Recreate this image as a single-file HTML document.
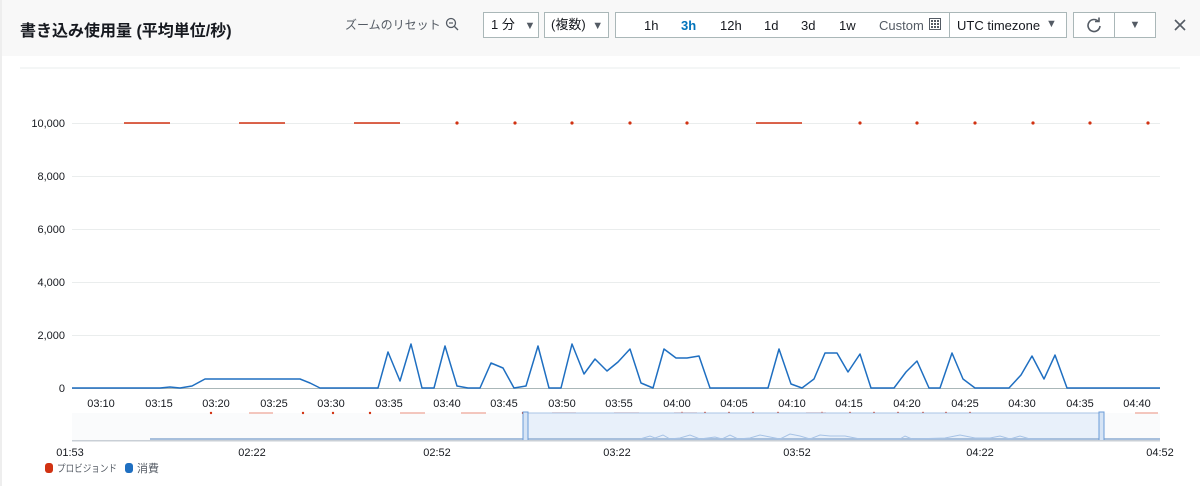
<!DOCTYPE html>
<html><head><meta charset="utf-8"><style>
*{margin:0;padding:0;box-sizing:border-box}
body{width:1200px;height:486px;background:#fff;font-family:"Liberation Sans","Noto Sans CJK JP",sans-serif;position:relative;overflow:hidden;color:#16191f}
.hdr{position:absolute;left:0;top:0;width:1200px;height:56px;background:#f8f8f8}
.abs{position:absolute}
.box{position:absolute;top:12px;height:26px;border:1px solid #aab7b8;background:#fff;font-size:13px;line-height:24px}
</style></head><body>
<div class="hdr"></div>
<div class="abs" style="left:0;top:0;width:2px;height:486px;background:#eeeeee"></div>
<div class="abs" style="left:20px;top:17px;font-size:16px;font-weight:bold">書き込み使用量 (平均単位/秒)</div>
<div class="abs" style="left:345px;top:16px;font-size:12px;color:#545b64">ズームのリセット</div>
<svg class="abs" style="left:445px;top:17px" width="14" height="14"><circle cx="6" cy="6" r="4.5" fill="none" stroke="#545b64" stroke-width="1.3"/><line x1="9.5" y1="9.5" x2="13" y2="13" stroke="#545b64" stroke-width="1.3"/><line x1="4" y1="6" x2="8" y2="6" stroke="#545b64" stroke-width="1.2"/></svg>
<div class="box" style="left:483px;width:56px;padding-left:7px">1 分 <span style="font-size:11px;margin-left:6px;color:#545b64">▼</span></div>
<div class="box" style="left:544px;width:65px;padding-left:6px">(複数) <span style="font-size:11px;margin-left:3px;color:#545b64">▼</span></div>
<div class="box" style="left:615px;width:452px"></div>
<div class="abs" style="top:18px;font-size:13px;left:644px">1h</div>
<div class="abs" style="top:18px;font-size:13px;left:681px;color:#0073bb;font-weight:bold">3h</div>
<div class="abs" style="top:18px;font-size:13px;left:720px">12h</div>
<div class="abs" style="top:18px;font-size:13px;left:764px">1d</div>
<div class="abs" style="top:18px;font-size:13px;left:801px">3d</div>
<div class="abs" style="top:18px;font-size:13px;left:839px">1w</div>
<div class="abs" style="top:18px;font-size:13px;left:879px;color:#545b64">Custom</div>
<svg class="abs" style="left:929px;top:18px" width="12" height="12"><rect x="0.5" y="0.5" width="11" height="11" fill="#fff" stroke="#545b64"/><g fill="#545b64"><rect x="2" y="2" width="2" height="2"/><rect x="5" y="2" width="2" height="2"/><rect x="8" y="2" width="2" height="2"/><rect x="2" y="5" width="2" height="2"/><rect x="5" y="5" width="2" height="2"/><rect x="8" y="5" width="2" height="2"/><rect x="2" y="8" width="2" height="2"/><rect x="5" y="8" width="2" height="2"/><rect x="8" y="8" width="2" height="2"/></g></svg>
<div class="abs" style="left:949px;top:12px;width:1px;height:26px;background:#aab7b8"></div>
<div class="abs" style="top:18px;font-size:13px;left:957px">UTC timezone</div>
<div class="abs" style="top:18px;font-size:11px;left:1046px;color:#545b64">▼</div>
<div class="box" style="left:1073px;width:42px"></div>
<svg class="abs" style="left:1086px;top:17px" width="16" height="16"><path d="M12.5 4.5 A6 6 0 1 0 14 9" fill="none" stroke="#545b64" stroke-width="1.6"/><path d="M9 4.5 L13 4.5 L13 0.5" fill="none" stroke="#545b64" stroke-width="1.6"/></svg>
<div class="box" style="left:1114px;width:42px;text-align:center;font-size:11px;color:#545b64">▼</div>
<svg class="abs" style="left:1174px;top:19px" width="12" height="12"><path d="M1 1 L11 11 M11 1 L1 11" stroke="#545b64" stroke-width="1.6"/></svg>

<svg class="abs" style="left:0;top:0" width="1200" height="486">
<g stroke="#eaeded" stroke-width="1">
<line x1="20" y1="68" x2="1180" y2="68"/>
<line x1="72" y1="123.5" x2="1160" y2="123.5"/><line x1="72" y1="176.5" x2="1160" y2="176.5"/><line x1="72" y1="229.5" x2="1160" y2="229.5"/><line x1="72" y1="282.5" x2="1160" y2="282.5"/><line x1="72" y1="335.5" x2="1160" y2="335.5"/>
</g>
<line x1="72" y1="388.5" x2="1160" y2="388.5" stroke="#aab7b8"/>
<g font-size="11" fill="#16191f" text-anchor="end" font-family="Liberation Sans">
<text x="65" y="127">10,000</text><text x="65" y="180">8,000</text><text x="65" y="233">6,000</text><text x="65" y="286">4,000</text><text x="65" y="339">2,000</text><text x="65" y="392">0</text>
</g>
<g font-size="11" fill="#16191f" text-anchor="middle" font-family="Liberation Sans">
<text x="101" y="407">03:10</text><text x="159" y="407">03:15</text><text x="216" y="407">03:20</text><text x="274" y="407">03:25</text><text x="331" y="407">03:30</text><text x="389" y="407">03:35</text><text x="447" y="407">03:40</text><text x="504" y="407">03:45</text><text x="562" y="407">03:50</text><text x="619" y="407">03:55</text><text x="677" y="407">04:00</text><text x="734" y="407">04:05</text><text x="792" y="407">04:10</text><text x="849" y="407">04:15</text><text x="907" y="407">04:20</text><text x="965" y="407">04:25</text><text x="1022" y="407">04:30</text><text x="1080" y="407">04:35</text><text x="1137" y="407">04:40</text>
<text x="70" y="456">01:53</text><text x="252" y="456">02:22</text><text x="437" y="456">02:52</text><text x="617" y="456">03:22</text><text x="797" y="456">03:52</text><text x="980" y="456">04:22</text><text x="1160" y="456">04:52</text>
</g>
<g stroke="#d13212" stroke-width="1.5">
<line x1="124" y1="123" x2="170" y2="123"/><line x1="239" y1="123" x2="285" y2="123"/><line x1="354" y1="123" x2="400" y2="123"/><line x1="756" y1="123" x2="802" y2="123"/>
</g>
<g fill="#d13212">
<circle cx="457" cy="123" r="1.6"/><circle cx="515" cy="123" r="1.6"/><circle cx="572" cy="123" r="1.6"/><circle cx="630" cy="123" r="1.6"/><circle cx="687" cy="123" r="1.6"/><circle cx="860" cy="123" r="1.6"/><circle cx="917" cy="123" r="1.6"/><circle cx="975" cy="123" r="1.6"/><circle cx="1033" cy="123" r="1.6"/><circle cx="1090" cy="123" r="1.6"/><circle cx="1148" cy="123" r="1.6"/>
</g>
<polyline fill="none" stroke="#1f6fc1" stroke-width="1.5" stroke-linejoin="round" points="72,388 160,388 170,387 180,388 192,386 205,379 290,379 300,379 310,383 320,388 378,388 388,352 400,381 411,344 422,388 434,388 445,346 457,386 468,388 480,388 491,363 503,368 514,388 526,386 538,346 549,388 561,388 572,344 584,374 595,359 607,371 618,362 630,349 641,383 653,388 664,349 676,358 687,358 699,356 710,388 768,388 779,349 791,384 802,388 814,379 825,353 837,353 848,372 860,354 871,388 894,388 906,372 917,361 929,388 940,388 952,353 963,379 975,388 1009,388 1021,375 1032,356 1044,379 1055,355 1067,388 1160,388"/>
<rect x="72" y="413" width="1088" height="27" fill="#fafbfc"/>
<g fill="#d13212"><circle cx="211" cy="413" r="1.2"/><circle cx="303" cy="413" r="1.2"/><circle cx="333" cy="413" r="1.2"/><circle cx="370" cy="413" r="1.2"/><circle cx="523" cy="413" r="1.2"/><circle cx="682" cy="413" r="1.2"/><circle cx="705" cy="413" r="1.2"/><circle cx="729" cy="413" r="1.2"/><circle cx="753" cy="413" r="1.2"/><circle cx="778" cy="413" r="1.2"/><circle cx="822" cy="413" r="1.2"/><circle cx="850" cy="413" r="1.2"/><circle cx="874" cy="413" r="1.2"/><circle cx="898" cy="413" r="1.2"/><circle cx="923" cy="413" r="1.2"/><circle cx="946" cy="413" r="1.2"/><circle cx="970" cy="413" r="1.2"/></g>
<g stroke="#f0b4a8" stroke-width="1.5"><line x1="249" y1="413" x2="273" y2="413"/><line x1="400" y1="413" x2="425" y2="413"/><line x1="461" y1="413" x2="486" y2="413"/><line x1="552" y1="413" x2="576" y2="413"/><line x1="614" y1="413" x2="639" y2="413"/><line x1="674" y1="413" x2="697" y2="413"/><line x1="806" y1="413" x2="826" y2="413"/><line x1="1135" y1="413" x2="1158" y2="413"/></g>
<rect x="524" y="413" width="578" height="27" fill="#e8f0fa" stroke="#aac4e6"/>
<line x1="150" y1="439" x2="1160" y2="439" stroke="#a7bfdc" stroke-width="2"/>
<polyline fill="none" stroke="#a7c3e6" stroke-width="1" points="640,439 650,436 655,438 663,435 670,439 680,438 690,435 700,439 715,437 722,439 730,435 738,439 750,438 760,435 770,437 780,439 790,434 800,436 810,439 820,435 830,436 845,436 860,439 900,439 905,436 912,439 945,438 960,435 975,438 990,438 1000,436 1010,439 1020,436 1030,439 1050,439"/>
<rect x="523" y="412" width="5" height="29" fill="#d6e4f5" stroke="#6a9bd8"/>
<rect x="1099" y="412" width="5" height="29" fill="#d6e4f5" stroke="#6a9bd8"/>
<rect x="72" y="440" width="1088" height="1.5" fill="#c9cfd6"/>
<rect x="45" y="463" width="8" height="10" rx="3" fill="#d13212"/>
<rect x="125" y="463" width="8" height="10" rx="3" fill="#1f6fc1"/>
<text x="57" y="472" font-size="10" textLength="60" lengthAdjust="spacingAndGlyphs" fill="#545b64" font-family="Liberation Sans, Noto Sans CJK JP, sans-serif">プロビジョンド</text>
<text x="137" y="472" font-size="11" fill="#545b64" font-family="Liberation Sans, Noto Sans CJK JP, sans-serif">消費</text>
</svg>
</body></html>
